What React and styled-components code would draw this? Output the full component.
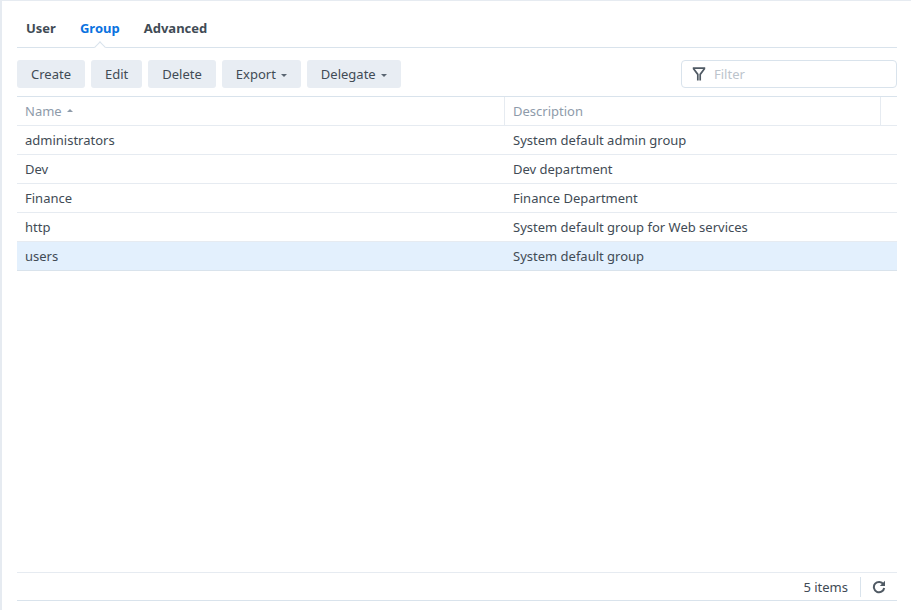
import React from "react";
import styled, { createGlobalStyle } from "styled-components";

const GlobalStyle = createGlobalStyle`
  html, body {
    margin: 0;
    padding: 0;
    height: 100%;
    background: #fff;
  }
  #root {
    height: 100%;
  }
`;

const Window = styled.div`
  box-sizing: border-box;
  width: 911px;
  height: 610px;
  padding: 1px 14px 9px 15px;
  border-top: 1px solid #e6ebf1;
  border-left: 2px solid #e6ebf1;
  background: #fff;
  display: flex;
  flex-direction: column;
  font-family: "Noto Sans", sans-serif;
  font-size: 13px;
  color: #414b55;
`;

const Tabs = styled.div`
  position: relative;
  display: flex;
  gap: 24px;
  height: 45px;
  padding-left: 9px;
  border-bottom: 1px solid #d9e3ec;
  flex-shrink: 0;
`;

const Tab = styled.div`
  padding-top: 16px;
  font-weight: 700;
  line-height: 20px;
  color: ${(p) => (p.$active ? "#0a72e0" : "#414b55")};
`;

const TabArrow = styled.span`
  position: absolute;
  left: 79px;
  bottom: -4px;
  width: 7px;
  height: 7px;
  background: #fff;
  border-top: 1px solid #d9e3ec;
  border-left: 1px solid #d9e3ec;
  transform: rotate(45deg);
`;

const Toolbar = styled.div`
  display: flex;
  align-items: center;
  gap: 6px;
  height: 28px;
  margin-top: 12px;
  flex-shrink: 0;
`;

const Button = styled.button`
  display: flex;
  align-items: center;
  gap: 5px;
  height: 28px;
  padding: 0 14px;
  border: 0;
  border-radius: 3px;
  background: #e8edf3;
  color: #414b55;
  font: inherit;
`;

const Caret = styled.span`
  width: 0;
  height: 0;
  margin-top: 2px;
  border-left: 3.5px solid transparent;
  border-right: 3.5px solid transparent;
  border-top: 3.5px solid #5a6672;
`;

const FilterBox = styled.div`
  box-sizing: border-box;
  display: flex;
  align-items: center;
  gap: 8px;
  width: 216px;
  height: 28px;
  margin-left: auto;
  padding-left: 10px;
  border: 1px solid #d9e3ec;
  border-radius: 4px;
  color: #bcc4cc;
`;

const Table = styled.div`
  margin-top: 8px;
  border-top: 1px solid #d9e3ec;
  flex: 1;
`;

const Row = styled.div`
  display: grid;
  grid-template-columns: 488px 1fr;
  height: 29px;
  box-sizing: border-box;
  align-items: center;
  border-bottom: 1px solid ${(p) => (p.$selected ? "#d9e3ec" : "#e6ebf1")};
  background: ${(p) => (p.$selected ? "#e3f0fd" : "#fff")};
`;

const HeaderRow = styled.div`
  display: grid;
  grid-template-columns: 488px 1fr 16px;
  height: 29px;
  box-sizing: border-box;
  border-bottom: 1px solid #e6ebf1;
  color: #8e9baa;
`;

const HeaderCell = styled.div`
  display: flex;
  align-items: center;
  gap: 5px;
  padding-left: 8px;
  border-right: ${(p) => (p.$last ? "0" : "1px solid #e6ebf1")};
`;

const SortArrow = styled.span`
  width: 0;
  height: 0;
  margin-top: -2px;
  border-left: 3.5px solid transparent;
  border-right: 3.5px solid transparent;
  border-bottom: 3.5px solid #8e9baa;
`;

const Cell = styled.div`
  padding-left: 8px;
  white-space: nowrap;
`;

const Footer = styled.div`
  display: flex;
  align-items: center;
  justify-content: flex-end;
  height: 29px;
  box-sizing: border-box;
  border-top: 1px solid #e6ebf1;
  border-bottom: 1px solid #d9e3ec;
  flex-shrink: 0;
`;

const Count = styled.span`
  padding-right: 12px;
`;

const Refresh = styled.div`
  display: flex;
  align-items: center;
  justify-content: center;
  width: 36px;
  height: 20px;
  border-left: 1px solid #d9e3ec;
`;

const groups = [
  { name: "administrators", description: "System default admin group" },
  { name: "Dev", description: "Dev department" },
  { name: "Finance", description: "Finance Department" },
  { name: "http", description: "System default group for Web services" },
  { name: "users", description: "System default group", selected: true },
];

function FilterIcon() {
  return (
    <svg width="14" height="14" viewBox="0 0 14 14" fill="none" stroke="#505a64" strokeWidth="1.7">
      <path d="M0.8 1.2h12.4M1.2 1.2l4.6 6.2v6M12.8 1.2L8.2 7.4v6" />
    </svg>
  );
}

function RefreshIcon() {
  return (
    <svg width="14" height="14" viewBox="0 0 14 14" fill="none">
      <path d="M11.4 4.2A5.2 5.2 0 1 0 12.2 8" stroke="#505a64" strokeWidth="2" />
      <path d="M13 0.8V6H7.8z" fill="#505a64" />
    </svg>
  );
}

export default function App() {
  return (
    <>
      <GlobalStyle />
      <Window>
        <Tabs>
          <Tab>User</Tab>
          <Tab $active>Group</Tab>
          <Tab>Advanced</Tab>
          <TabArrow />
        </Tabs>
        <Toolbar>
          <Button>Create</Button>
          <Button>Edit</Button>
          <Button>Delete</Button>
          <Button>Export<Caret /></Button>
          <Button>Delegate<Caret /></Button>
          <FilterBox>
            <FilterIcon />
            Filter
          </FilterBox>
        </Toolbar>
        <Table>
          <HeaderRow>
            <HeaderCell>Name<SortArrow /></HeaderCell>
            <HeaderCell>Description</HeaderCell>
            <HeaderCell $last />
          </HeaderRow>
          {groups.map((group) => (
            <Row key={group.name} $selected={group.selected}>
              <Cell>{group.name}</Cell>
              <Cell>{group.description}</Cell>
            </Row>
          ))}
        </Table>
        <Footer>
          <Count>5 items</Count>
          <Refresh>
            <RefreshIcon />
          </Refresh>
        </Footer>
      </Window>
    </>
  );
}
